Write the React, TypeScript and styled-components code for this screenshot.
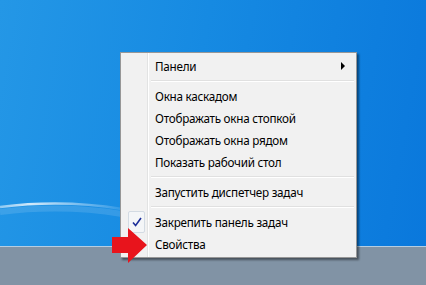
import styled, { createGlobalStyle } from "styled-components";

const GlobalStyle = createGlobalStyle`
  html, body {
    margin: 0;
    padding: 0;
    width: 426px;
    height: 285px;
    overflow: hidden;
  }
  body {
    font-family: "Noto Sans", "Open Sans", sans-serif;
    font-size: 12px;
  }
`;

type Item = { label?: string; sep?: boolean; submenu?: boolean; checked?: boolean };

const items: Item[] = [
  { label: "Панели", submenu: true },
  { sep: true },
  { label: "Окна каскадом" },
  { label: "Отображать окна стопкой" },
  { label: "Отображать окна рядом" },
  { label: "Показать рабочий стол" },
  { sep: true },
  { label: "Запустить диспетчер задач" },
  { sep: true },
  { label: "Закрепить панель задач", checked: true },
  { label: "Свойства" },
];

const App = () => {
  return (
    <>
      <GlobalStyle />
      <Screen>
        <Desktop>
          <Wave viewBox="0 0 426 246" preserveAspectRatio="none">
            <defs>
              <linearGradient id="streak" x1="0" x2="1" y1="0" y2="0">
                <stop offset="0" stopColor="#ffffff" stopOpacity="0.5" />
                <stop offset="0.25" stopColor="#ffffff" stopOpacity="0.8" />
                <stop offset="0.6" stopColor="#ffffff" stopOpacity="0.45" />
                <stop offset="1" stopColor="#ffffff" stopOpacity="0.1" />
              </linearGradient>
            </defs>
            <path d="M0 207 C 40 202, 80 202, 122 209" stroke="url(#streak)" strokeWidth="2.5" fill="none" />
            <path d="M0 212 C 40 207, 80 207, 122 214" stroke="#ffffff" strokeOpacity="0.12" strokeWidth="6" fill="none" />
          </Wave>
        </Desktop>
        <Taskbar />

        <Menu>
          {items.map((it, i) =>
            it.sep ? (
              <Separator key={i} />
            ) : (
              <Row key={i}>
                {it.checked && (
                  <CheckBox>
                    <svg width="12" height="12" viewBox="0 0 12 12">
                      <path d="M2 6.5 L4.6 9.5 L10 2" stroke="#1c2f9a" strokeWidth="1.6" fill="none" />
                    </svg>
                  </CheckBox>
                )}
                <Label>{it.label}</Label>
                {it.submenu && <SubArrow />}
              </Row>
            )
          )}
        </Menu>

        <RedArrow width="40" height="40" viewBox="0 0 40 40">
          <path d="M2 10 L18 10 L18 1 L37 18 L18 36 L18 26 L2 26 Z" fill="#e8141c" />
        </RedArrow>
      </Screen>
    </>
  );
};

export default App;

const Screen = styled.div`
  position: relative;
  width: 426px;
  height: 285px;
  display: flex;
  flex-direction: column;
  overflow: hidden;
`;

const Desktop = styled.div`
  position: relative;
  height: 246px;
  background: linear-gradient(100deg, #2497e6 0%, #168ae2 45%, #0a78dc 100%);
`;

const Wave = styled.svg`
  position: absolute;
  inset: 0;
  width: 100%;
  height: 100%;
`;

const Taskbar = styled.div`
  flex: 1;
  background: #8193a5;
  border-top: 1px solid #b5cde2;
`;

const Menu = styled.div`
  position: absolute;
  left: 120px;
  top: 52px;
  width: 235px;
  padding: 2px 0;
  border: 1px solid #979797;
  background: linear-gradient(
    to right,
    #f1f1f1 26px,
    #e2e3e3 26px,
    #e2e3e3 27px,
    #ffffff 27px,
    #ffffff 28px,
    #f1f1f1 28px
  );
  box-shadow: 2px 2px 2px rgba(0, 0, 0, 0.45);
  display: flex;
  flex-direction: column;
`;

const Row = styled.div`
  position: relative;
  height: 22px;
  display: flex;
  align-items: center;
  padding-left: 34px;
  color: #000;
`;

const Label = styled.span`
  flex: 1;
  white-space: nowrap;
  line-height: 22px;
  font-size: 11.7px;
  letter-spacing: -0.25px;
`;

const SubArrow = styled.span`
  width: 0;
  height: 0;
  margin-right: 11px;
  border-top: 4px solid transparent;
  border-bottom: 4px solid transparent;
  border-left: 4px solid #000;
`;

const CheckBox = styled.span`
  position: absolute;
  left: 7px;
  top: 0;
  width: 15px;
  height: 20px;
  border: 1px solid #d3dbe3;
  border-radius: 2px;
  background: #f4f6f8;
  display: flex;
  align-items: center;
  justify-content: center;
`;

const Separator = styled.div`
  height: 8px;
  margin-left: 30px;
  margin-right: 2px;
  display: flex;
  flex-direction: column;
  justify-content: center;
  &::before {
    content: "";
    display: block;
    height: 1px;
    background: #e0e0e0;
  }
  &::after {
    content: "";
    display: block;
    height: 1px;
    background: #ffffff;
  }
`;

const RedArrow = styled.svg`
  position: absolute;
  left: 110px;
  top: 227px;
`;
